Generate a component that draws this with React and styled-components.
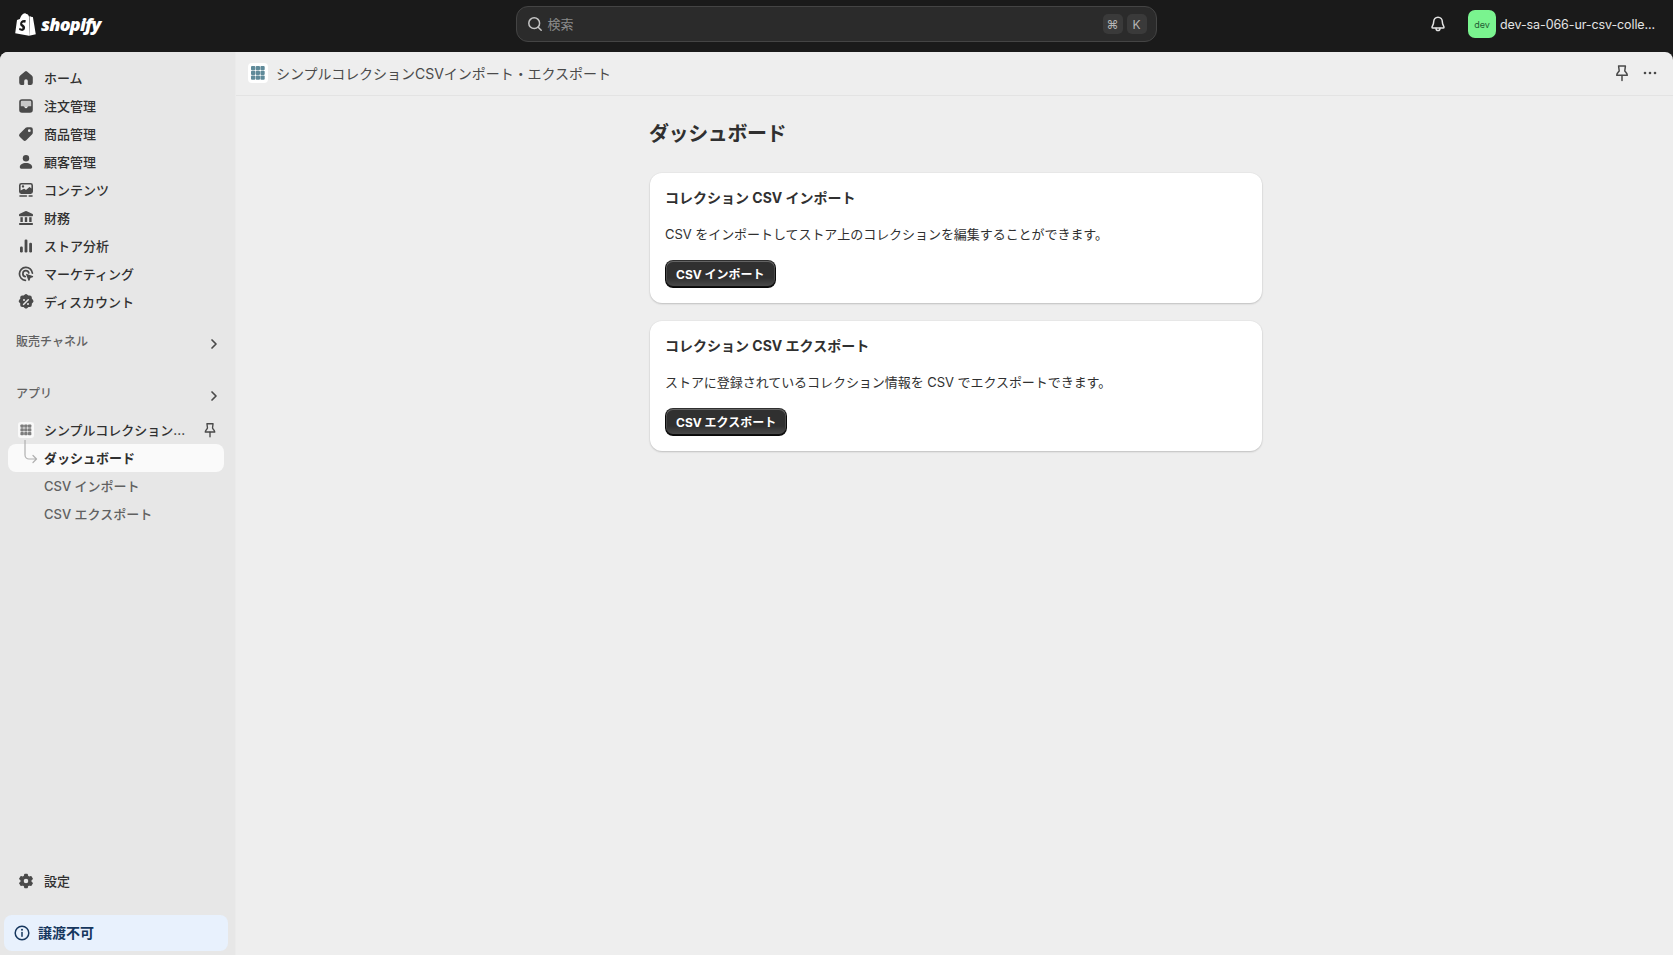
import React from 'react';
import styled, { createGlobalStyle } from 'styled-components';

const GlobalStyle = createGlobalStyle`
  html, body {
    margin: 0;
    height: 100%;
    overflow: hidden;
    background: #1a1a1a;
    font-family: "Inter", "Noto Sans CJK JP", "Noto Sans", sans-serif;
    font-size: 13px;
    color: #303030;
  }
  * { box-sizing: border-box; }
`;

const Frame = styled.div`
  height: 100vh;
  display: flex;
  flex-direction: column;
`;

const TopBar = styled.header`
  height: 52px;
  flex: none;
  padding-bottom: 4px;
  display: grid;
  grid-template-columns: 1fr 640px 1fr;
  align-items: center;
  background: #1a1a1a;
`;

const Brand = styled.div`
  display: flex;
  align-items: center;
  gap: 5px;
  padding-left: 15px;
`;

const Wordmark = styled.span`
  font-family: "Open Sans", sans-serif;
  font-size: 18px;
  font-weight: 800;
  font-style: italic;
  letter-spacing: -0.8px;
  color: #fff;
`;

const Search = styled.div`
  height: 36px;
  margin-left: -1px;
  display: flex;
  align-items: center;
  padding: 0 9px 0 8px;
  background: #2b2b2b;
  border: 1px solid #444;
  border-radius: 12px;
  color: #8a8a8a;
`;

const SearchGlyph = styled.span`
  display: flex;
  margin-right: 3px;
  color: #c4c4c4;
`;

const SearchText = styled.span`
  flex: 1;
  padding-bottom: 2px;
  font-size: 13px;
`;

const Key = styled.kbd`
  width: 20px;
  height: 20px;
  margin-left: 4px;
  display: flex;
  align-items: center;
  justify-content: center;
  border-radius: 5px;
  background: #3a3a3a;
  color: #b5b5b5;
  font-family: inherit;
  font-size: 12px;
`;

const TopRight = styled.div`
  display: flex;
  align-items: center;
  justify-content: flex-end;
  padding-right: 18px;
`;

const Bell = styled.span`
  display: flex;
  margin-right: 20px;
  color: #e3e3e3;
`;

const Avatar = styled.span`
  width: 28px;
  height: 28px;
  margin-right: 4px;
  display: flex;
  align-items: center;
  justify-content: center;
  border-radius: 7px;
  background: #7af48f;
  color: #1f5c34;
  font-size: 9px;
`;

const ShopName = styled.span`
  width: 155px;
  white-space: nowrap;
  color: #e3e3e3;
  font-size: 12.5px;
  letter-spacing: -0.1px;
  font-weight: 400;
`;

const Body = styled.div`
  flex: 1;
  min-height: 0;
  display: flex;
  border-radius: 8px 8px 0 0;
  overflow: hidden;
  background: #eeeeee;
`;

const Sidebar = styled.nav`
  width: 236px;
  flex: none;
  display: flex;
  flex-direction: column;
  padding-top: 12px;
  background: #e7e7e7;
  border-right: 1px solid #ebebeb;
`;

const Row = styled.div`
  position: relative;
  height: 28px;
  margin: ${p => p.$top || 0}px 11px 0 8px;
  padding: 0 8px;
  display: flex;
  align-items: center;
  gap: 8px;
  border-radius: 8px;
  background: ${p => (p.$active ? '#fafafa' : 'transparent')};
  color: ${p => (p.$muted ? '#616161' : '#303030')};
  font-size: 13px;
  font-weight: ${p => (p.$active ? 700 : 500)};
`;

const RowIcon = styled.span`
  width: 20px;
  height: 20px;
  flex: none;
  display: flex;
  color: #4a4a4a;
`;

const RowLabel = styled.span`
  flex: 1;
  min-width: 0;
  padding-bottom: 2px;
  white-space: nowrap;
`;

const RowPin = styled.span`
  display: flex;
  margin-right: -3px;
  color: #4a4a4a;
`;

const SubRow = styled(Row)`
  padding-left: 36px;
`;

const Section = styled.div`
  height: 28px;
  margin-top: ${p => p.$top}px;
  padding: 0 11px 0 16px;
  display: flex;
  align-items: center;
  justify-content: space-between;
  color: #616161;
  font-size: 12px;
  font-weight: 500;
`;

const SectionLabel = styled.span`
  position: relative;
  top: -2px;
`;

const SectionChevron = styled.span`
  display: flex;
  margin-top: 3px;
  color: #4a4a4a;
`;

const AppBadge = styled.span`
  width: 16px;
  height: 16px;
  margin: 2px;
  display: flex;
  border-radius: 3px;
  background: #f9f9f9;
`;

const Elbow = styled.svg`
  position: absolute;
  left: 16px;
  top: -4px;
  color: #b0b0b0;
`;

const Spacer = styled.div`
  flex: 1;
`;

const Notice = styled.div`
  height: 36px;
  margin: 20px 7px 4px 4px;
  padding: 0 8px;
  display: flex;
  align-items: center;
  gap: 6px;
  border-radius: 8px;
  background: #e8f1fd;
  color: #16375e;
  font-size: 14px;
  font-weight: 700;
`;

const NoticeText = styled.span`
  padding-bottom: 2px;
`;

const Main = styled.main`
  flex: 1;
  min-width: 0;
  display: flex;
  flex-direction: column;
`;

const AppHeader = styled.div`
  height: 44px;
  flex: none;
  display: flex;
  align-items: center;
  padding: 0 13px 1px 12px;
  border-bottom: 1px solid #e3e3e3;
  color: #4a4a4a;
  font-size: 14px;
`;

const HeaderBadge = styled.span`
  width: 20px;
  height: 20px;
  margin-right: 8px;
  display: flex;
  border-radius: 4px;
  background: #fff;
`;

const HeaderTitle = styled.span`
  flex: 1;
  padding-bottom: 1px;
  letter-spacing: -0.03px;
`;

const HeaderAction = styled.span`
  display: flex;
  margin-left: 8px;
  color: #4a4a4a;
`;

const Page = styled.div`
  width: 612px;
  margin: 0 auto;
  padding: 26px 0 0 0;
  position: relative;
  left: 1.5px;
  display: flex;
  flex-direction: column;
  gap: 18px;
`;

const PageTitle = styled.h1`
  margin: 0 0 9px -1px;
  font-size: 20px;
  line-height: 24px;
  font-weight: 700;
  letter-spacing: -0.4px;
  color: #303030;
`;

const Card = styled.section`
  padding: 15px;
  display: flex;
  flex-direction: column;
  align-items: flex-start;
  gap: 16px;
  border-radius: 12px;
  background: #fff;
  box-shadow: 0 1px 2px rgba(0, 0, 0, 0.18), 0 0 0 1px rgba(0, 0, 0, 0.02);
`;

const CardTitle = styled.h2`
  margin: 0;
  font-size: 14px;
  line-height: 20px;
  font-weight: 700;
  color: #303030;
`;

const CardText = styled.p`
  margin: 0;
  font-size: 13px;
  line-height: 20px;
  letter-spacing: -0.05px;
  color: #303030;
`;

const Button = styled.button`
  height: 28px;
  padding: 0 11px 2px;
  border: 0;
  border-radius: 8px;
  background: linear-gradient(180deg, rgba(48, 48, 48, 0) 63.53%, rgba(255, 255, 255, 0.15) 100%), #303030;
  box-shadow:
    inset 0 -1px 0 1px rgba(0, 0, 0, 0.8),
    inset 0 0 0 1px #303030,
    inset 0 0.5px 0 1.5px rgba(255, 255, 255, 0.25);
  color: #fff;
  font-family: inherit;
  font-size: 12px;
  font-weight: 700;
`;

const Ico = ({ size = 20, children, ...rest }) => (
  <svg width={size} height={size} viewBox="0 0 20 20" fill="currentColor" {...rest}>
    {children}
  </svg>
);

const Line = { fill: 'none', stroke: 'currentColor', strokeWidth: 1.5, strokeLinecap: 'round', strokeLinejoin: 'round' };

const HomeIcon = () => (
  <Ico><path d="M9 3.4a1.5 1.5 0 0 1 2 0l4.800 4.100c.7.500 1 1.200 1 2v5.200a2.200 2.200 0 0 1-2.200 2.200h-1.800a1 1 0 0 1-1-1v-2.800a1.800 1.800 0 0 0-3.600 0v2.800a1 1 0 0 1-1 1H5.400a2.200 2.200 0 0 1-2.200-2.200V9.500c0-.8.3-1.500 1-2z" /></Ico>
);
const OrdersIcon = () => (
  <Ico>
    <path fillRule="evenodd" fill="#8c8c8c" d="M6 4h8a2 2 0 0 1 2 2v5H4V6a2 2 0 0 1 2-2z" opacity=".35" />
    <path fillRule="evenodd" d="M6 3.200h8a2.800 2.800 0 0 1 2.800 2.800v8a2.800 2.800 0 0 1-2.800 2.800H6A2.800 2.800 0 0 1 3.200 14V6A2.800 2.800 0 0 1 6 3.200zM6 4.800A1.200 1.200 0 0 0 4.800 6v4.200h2.400c.6 0 1 .3 1.200.8.3.8.9 1.200 1.600 1.200s1.300-.4 1.600-1.200c.2-.5.6-.8 1.200-.8h2.400V6A1.200 1.200 0 0 0 14 4.800z" />
  </Ico>
);
const TagIcon = () => (
  <Ico>
    <path fillRule="evenodd" d="M11.200 3.200h3.600a2 2 0 0 1 2 2v3.600c0 .6-.2 1.100-.6 1.500l-6 6a2 2 0 0 1-2.900 0l-3.600-3.600a2 2 0 0 1 0-2.900l6-6c.4-.4.9-.6 1.500-.6zM13.300 8.100a1.400 1.400 0 1 0 0-2.800 1.400 1.400 0 0 0 0 2.800z" />
  </Ico>
);
const PersonIcon = () => (
  <Ico>
    <circle cx="10" cy="6.200" r="3.200" />
    <path d="M10 11c-3.800 0-6.200 1.700-6.200 4 0 1.100.8 1.800 1.800 1.800h8.800c1 0 1.800-.7 1.800-1.800 0-2.300-2.400-4-6.200-4z" />
  </Ico>
);
const ContentIcon = () => (
  <Ico>
    <path fillRule="evenodd" d="M5.400 3h9.200A2.400 2.400 0 0 1 17 5.400v6.200a2.400 2.400 0 0 1-2.400 2.400H5.400A2.400 2.400 0 0 1 3 11.600V5.400A2.400 2.400 0 0 1 5.400 3zM4.600 10.600V5.400c0-.4.4-.8.8-.8h9.200c.4 0 .8.4.8.8v3l-1.200-1a1 1 0 0 0-1.300 0L10 10 8.600 8.900a1 1 0 0 0-1.200 0zM7 7.600a1.200 1.200 0 1 0 0-2.400 1.200 1.200 0 0 0 0 2.400z" />
    <rect x="3.200" y="15.200" width="8" height="1.600" rx=".8" />
    <rect x="12.400" y="15.200" width="4.400" height="1.600" rx=".8" />
  </Ico>
);
const BankIcon = () => (
  <Ico>
    <path d="M9.200 3.200a2 2 0 0 1 1.600 0l5.400 2.500c.6.3.8.7.8 1.100v.7c0 .5-.4.8-.8.8H3.800a.8.8 0 0 1-.8-.8v-.7c0-.4.2-.8.8-1.100z" />
    <rect x="4.400" y="9.200" width="2.400" height="4.800" />
    <rect x="8.800" y="9.200" width="2.400" height="4.800" />
    <rect x="13.200" y="9.200" width="2.400" height="4.800" />
    <rect x="3" y="15" width="14" height="2" rx=".8" />
  </Ico>
);
const ChartIcon = () => (
  <Ico>
    <rect x="4" y="10.500" width="2.800" height="6" rx="1.200" />
    <rect x="8.600" y="3.500" width="2.800" height="13" rx="1.200" />
    <rect x="13.200" y="6.800" width="2.800" height="9.700" rx="1.200" />
  </Ico>
);
const TargetIcon = () => (
  <Ico>
    <path {...Line} strokeWidth="1.700" d="M16.400 9.200a6.500 6.500 0 1 0-7 7.200" />
    <path {...Line} strokeWidth="1.700" d="M12.800 9a3 3 0 1 0-3.600 3.600" />
    <path d="M10.100 10.600c-.2-.5.2-.9.7-.7l6 2.200c.5.200.5.9 0 1.100l-2.300.9-1 2.400c-.2.500-.9.500-1.100 0z" />
  </Ico>
);
const DiscountIcon = () => (
  <Ico>
    <path fillRule="evenodd" d="M8.600 2.700a2 2 0 0 1 2.800 0l1 .9 1.400-.1a2 2 0 0 1 2 1.900l.1 1.400 1 1a2 2 0 0 1 0 2.800l-1 1-.1 1.400a2 2 0 0 1-2 2l-1.400-.1-1 1a2 2 0 0 1-2.800 0l-1-1-1.400.1a2 2 0 0 1-2-2l.1-1.400-1-1a2 2 0 0 1 0-2.800l1-1-.1-1.400a2 2 0 0 1 2-1.900l1.400.1zM12.800 7.200a.8.8 0 0 0-1.100 0l-4.500 4.500a.8.8 0 1 0 1.100 1.100l4.500-4.500a.8.8 0 0 0 0-1.100zM8 9a1 1 0 1 0 0-2 1 1 0 0 0 0 2zm4 4a1 1 0 1 0 0-2 1 1 0 0 0 0 2z" />
  </Ico>
);
const GearIcon = () => (
  <Ico>
    <path
      fillRule="evenodd"
      stroke="currentColor"
      strokeWidth="1.200"
      strokeLinejoin="round"
      d="M8.800 3.400h2.400l.5 1.900 1.500.9 1.900-.5 1.200 2.100-1.400 1.400v1.600l1.400 1.400-1.200 2.100-1.900-.5-1.500.9-.5 1.900H8.800l-.5-1.900-1.500-.9-1.900.5-1.200-2.100 1.400-1.400V9.200L3.700 7.800l1.200-2.100 1.900.5 1.500-.9zM10 12.900a2.900 2.900 0 1 0 0-5.800 2.900 2.900 0 0 0 0 5.800z"
    />
  </Ico>
);
const PinIcon = ({ size = 20 }) => (
  <Ico size={size}>
    <path {...Line} d="M6.600 3h6.800l-.6 4.800c.1.900 2.300 2.300 2.500 4.400H4.700c.2-2.100 2.400-3.500 2.500-4.400z" />
    <path {...Line} d="M10 12.500v5" />
  </Ico>
);
const BellIcon = () => (
  <Ico>
    <path {...Line} d="M10 3.200c-2.600 0-4.300 2-4.300 4.400 0 3.200-1.700 4.600-1.700 5.600 0 .5.4.8.9.8h10.200c.5 0 .9-.3.9-.8 0-1-1.700-2.400-1.700-5.600 0-2.400-1.700-4.400-4.300-4.400z" />
    <path {...Line} d="M8 14.200c0 1.500.8 2.400 2 2.400s2-.9 2-2.400" />
  </Ico>
);
const SearchIcon = () => (
  <Ico>
    <circle {...Line} cx="9.200" cy="9.200" r="5.400" />
    <path {...Line} d="M13.200 13.200l3 3" />
  </Ico>
);
const ChevronIcon = () => (
  <Ico><path {...Line} strokeWidth="1.700" d="M8 6l4 4-4 4" /></Ico>
);
const InfoIcon = () => (
  <Ico>
    <circle {...Line} cx="10" cy="10" r="6.800" />
    <path {...Line} d="M10 9.600v3.600" />
    <circle cx="10" cy="6.800" r="1" />
  </Ico>
);
const DotsIcon = () => (
  <Ico>
    <circle cx="5" cy="10" r="1.300" />
    <circle cx="10" cy="10" r="1.300" />
    <circle cx="15" cy="10" r="1.300" />
  </Ico>
);

// blocks of the app's logo
const GridLogo = ({ size, color }) => (
  <svg width={size} height={size} viewBox="0 0 20 20" fill={color}>
    {[3, 7.700, 12.400].map(y =>
      [3, 7.700, 12.400].map(x => <rect key={`${x}-${y}`} x={x} y={y} width="4.300" height="4.300" rx="1" />)
    )}
  </svg>
);

const ShopifyBag = () => (
  <svg width="21" height="24" viewBox="0 0 21 24">
    <path fill="#fff" d="M14.600 4.200l-.7.200C13.500 3 12.800 2 11.600 2h-.2C11 1.500 10.500 1.200 10 1.200 6.900 1.300 5.400 5.100 4.900 7.100l-2.200.7c-.7.200-.7.200-.8.900L.2 21.300 14 23.800z" />
    <path fill="#fff" d="M15.400 4.100l-.3.100-1 19.600 6.800-1.500S18 5.300 17.900 5.200c0-.2-.2-.3-.3-.3l-1.800-.1z" />
    <path fill="#1a1a1a" d="M10.900 8.600l-.8 2.300s-.7-.4-1.600-.4c-1.300 0-1.300.8-1.300 1 0 1.100 2.900 1.500 2.900 4.100 0 2-1.300 3.300-3 3.300-2.100 0-3.100-1.300-3.100-1.300l.6-1.800s1.100.9 2 .9c.6 0 .9-.5.9-.8 0-1.400-2.400-1.500-2.400-3.900 0-2 1.400-3.900 4.300-3.900 1 0 1.500.5 1.500.5z" />
  </svg>
);

const mainNav = [
  ['ホーム', HomeIcon],
  ['注文管理', OrdersIcon],
  ['商品管理', TagIcon],
  ['顧客管理', PersonIcon],
  ['コンテンツ', ContentIcon],
  ['財務', BankIcon],
  ['ストア分析', ChartIcon],
  ['マーケティング', TargetIcon],
  ['ディスカウント', DiscountIcon],
];

const cards = [
  {
    title: 'コレクション CSV インポート',
    text: 'CSV をインポートしてストア上のコレクションを編集することができます。',
    action: 'CSV インポート',
  },
  {
    title: 'コレクション CSV エクスポート',
    text: 'ストアに登録されているコレクション情報を CSV でエクスポートできます。',
    action: 'CSV エクスポート',
  },
];

export default function App() {
  return (
    <Frame>
      <GlobalStyle />
      <TopBar>
        <Brand>
          <ShopifyBag />
          <Wordmark>shopify</Wordmark>
        </Brand>
        <Search>
          <SearchGlyph><SearchIcon /></SearchGlyph>
          <SearchText>検索</SearchText>
          <Key>⌘</Key>
          <Key>K</Key>
        </Search>
        <TopRight>
          <Bell><BellIcon /></Bell>
          <Avatar>dev</Avatar>
          <ShopName>dev-sa-066-ur-csv-colle...</ShopName>
        </TopRight>
      </TopBar>
      <Body>
        <Sidebar>
          {mainNav.map(([label, Icon]) => (
            <Row key={label}>
              <RowIcon><Icon /></RowIcon>
              <RowLabel>{label}</RowLabel>
            </Row>
          ))}
          <Section $top={12}>
            <SectionLabel>販売チャネル</SectionLabel>
            <SectionChevron><ChevronIcon /></SectionChevron>
          </Section>
          <Section $top={24}>
            <SectionLabel>アプリ</SectionLabel>
            <SectionChevron><ChevronIcon /></SectionChevron>
          </Section>
          <Row $top={8}>
            <RowIcon><AppBadge><GridLogo size={16} color="#7d7d7d" /></AppBadge></RowIcon>
            <RowLabel>シンプルコレクション...</RowLabel>
            <RowPin><PinIcon size={18} /></RowPin>
          </Row>
          <SubRow $active>
            <Elbow width="22" height="24" viewBox="0 0 22 24" fill="none" stroke="currentColor" strokeWidth="1.200" strokeLinecap="round" strokeLinejoin="round">
              <path d="M1 0v15a4 4 0 0 0 4 4h7M9 15.500l3.500 3.500L9 22.500" />
            </Elbow>
            <RowLabel>ダッシュボード</RowLabel>
          </SubRow>
          <SubRow $muted><RowLabel>CSV インポート</RowLabel></SubRow>
          <SubRow $muted><RowLabel>CSV エクスポート</RowLabel></SubRow>
          <Spacer />
          <Row>
            <RowIcon><GearIcon /></RowIcon>
            <RowLabel>設定</RowLabel>
          </Row>
          <Notice>
            <InfoIcon />
            <NoticeText>譲渡不可</NoticeText>
          </Notice>
        </Sidebar>
        <Main>
          <AppHeader>
            <HeaderBadge><GridLogo size={20} color="#5f8a99" /></HeaderBadge>
            <HeaderTitle>シンプルコレクションCSVインポート・エクスポート</HeaderTitle>
            <HeaderAction><PinIcon /></HeaderAction>
            <HeaderAction><DotsIcon /></HeaderAction>
          </AppHeader>
          <Page>
            <PageTitle>ダッシュボード</PageTitle>
            {cards.map(card => (
              <Card key={card.title}>
                <CardTitle>{card.title}</CardTitle>
                <CardText>{card.text}</CardText>
                <Button>{card.action}</Button>
              </Card>
            ))}
          </Page>
        </Main>
      </Body>
    </Frame>
  );
}
